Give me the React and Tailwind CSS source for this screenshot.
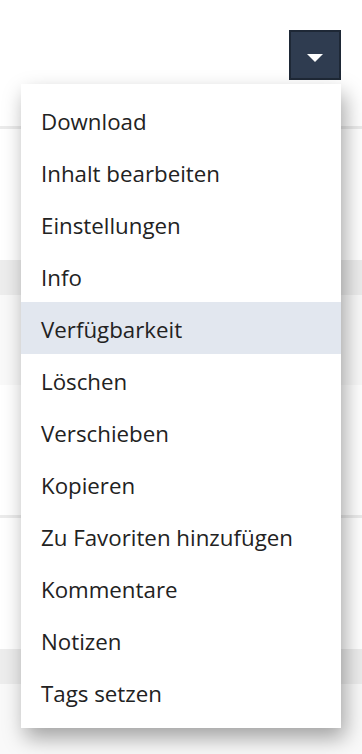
import { useState } from 'react';

const acciones = [
  'Download',
  'Inhalt bearbeiten',
  'Einstellungen',
  'Info',
  'Verfügbarkeit',
  'Löschen',
  'Verschieben',
  'Kopieren',
  'Zu Favoriten hinzufügen',
  'Kommentare',
  'Notizen',
  'Tags setzen',
];

function App() {
  const [activo, setActivo] = useState(4);

  return (
    <div className="relative w-[362px] h-[754px] overflow-hidden bg-white" style={{ fontFamily: '"Open Sans", sans-serif' }}>
      {/* Tabla de fondo */}
      <div className="flex flex-col">
        <div className="h-[126px]" />
        <div className="h-[3px] bg-[#ebebeb]" />
        <div className="h-[131px]" />
        <div className="h-[35px] bg-[#ededed]" />
        <div className="h-[90px] bg-[#f9f9f9]" />
        <div className="h-[130px]" />
        <div className="h-[3px] bg-[#ebebeb]" />
        <div className="h-[131px]" />
        <div className="h-[35px] bg-[#ededed]" />
        <div className="h-[90px] bg-[#f9f9f9]" />
      </div>

      {/* Botón del menú */}
      <button type="button" className="absolute left-[289px] top-[30px] w-[52px] h-[50px] flex items-center justify-center bg-[#2f3c50] border-2 border-[#1e2836]">
        <svg width="16" height="8" viewBox="0 0 16 8" className="mt-[6px]">
          <path d="M0 0 L16 0 L8 8 Z" fill="#ffffff" />
        </svg>
      </button>

      {/* Menú desplegable */}
      <div className="absolute left-[21px] top-[84px] w-[320px] py-[10px] bg-white shadow-[4px_10px_20px_rgba(0,0,0,0.35)]">
        {acciones.map((accion, i) => (
          <div key={accion} onMouseEnter={() => setActivo(i)}
            className={`h-[52px] flex items-center pl-[20px] pt-[3px] text-[22.3px] text-[#222222] cursor-pointer ${i === activo ? 'bg-[#e2e7ef]' : ''}`}>
            {accion}
          </div>
        ))}
      </div>
    </div>
  );
}
export default App;
